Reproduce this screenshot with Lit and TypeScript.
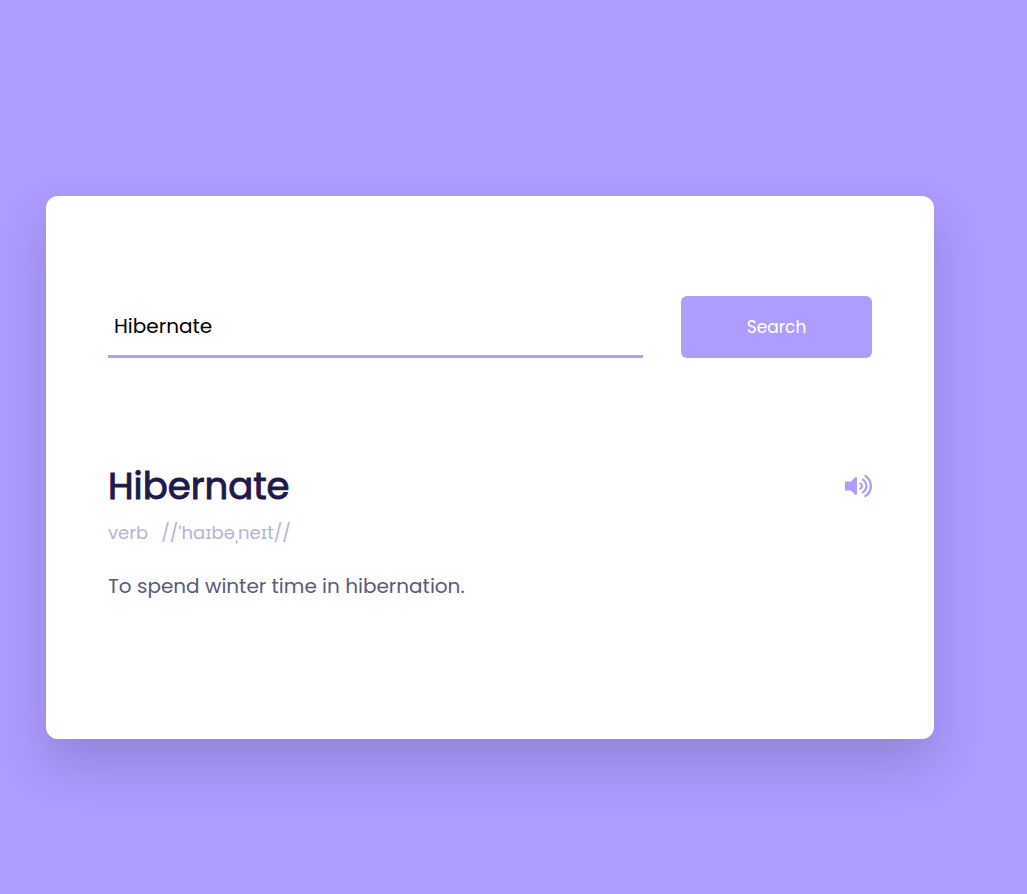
import { LitElement, html, css } from "lit";
import { customElement, state } from "lit/decorators.js";

@customElement("app-root")
export class AppRoot extends LitElement {
  static styles = css`
    :host {
      display: flex;
      align-items: center;
      box-sizing: border-box;
      min-height: 100vh;
      padding: 41px 93px 0 46px;
      background: #ae9cff;
      font-family: Poppins, Inter, sans-serif;
    }
    * {
      box-sizing: border-box;
      margin: 0;
      font-family: inherit;
    }
    .card {
      flex: 1;
      padding: 100px 62px;
      border-radius: 12px;
      background: #fff;
      box-shadow: 0 25px 50px rgba(38, 33, 61, 0.2);
    }
    .search {
      display: flex;
      justify-content: space-between;
    }
    .field {
      width: 70%;
      height: 62px;
      padding: 0 6px;
      border: 0;
      border-bottom: 3px solid #ae9cff;
      border-radius: 0;
      outline: 0;
      background: transparent;
      color: #000;
      font-size: 20px;
    }
    .submit {
      width: 25%;
      border: 0;
      border-radius: 6px;
      background: #ae9cff;
      color: #fff;
      font-size: 17px;
      cursor: pointer;
    }
    .result {
      padding: 100px 0 38px;
    }
    .word {
      display: flex;
      align-items: center;
      justify-content: space-between;
    }
    .title {
      color: #1f194c;
      font-size: 37px;
      font-weight: 400;
      line-height: 56px;
      -webkit-text-stroke: 1px currentColor;
    }
    .sound {
      display: flex;
      padding: 0;
      border: 0;
      background: transparent;
      color: #ae9cff;
      cursor: pointer;
    }
    .icon {
      width: 27px;
      height: 24px;
      fill: currentColor;
    }
    .details {
      display: flex;
      gap: 13px;
      padding: 5px 0 24px;
      color: #b3b3d6;
      font-size: 18px;
      line-height: 28px;
    }
    .meaning {
      color: #575a7b;
      font-size: 20px;
      line-height: 30px;
    }
  `;

  @state() private query = "Hibernate";

  private onInput(e: Event) {
    this.query = (e.target as HTMLInputElement).value;
  }

  render() {
    return html`
      <main class="card">
        <form class="search" @submit=${(e: Event) => e.preventDefault()}>
          <input
            class="field"
            type="text"
            aria-label="Word"
            .value=${this.query}
            @input=${this.onInput}
          />
          <button class="submit" type="submit">Search</button>
        </form>
        <section class="result">
          <div class="word">
            <h1 class="title">Hibernate</h1>
            <button class="sound" type="button" aria-label="Play pronunciation">
              <svg class="icon" viewBox="0 0 576 512" aria-hidden="true">
                <path
                  d="M215.03 71.05L126.06 160H24c-13.26 0-24 10.74-24 24v144c0 13.25 10.74 24 24 24h102.06l88.97 88.95c15.03 15.03 40.97 4.47 40.97-16.97V88.02c0-21.46-25.96-31.98-40.97-16.97zm233.32-51.08c-11.17-7.33-26.18-4.24-33.51 6.95-7.34 11.17-4.22 26.18 6.95 33.51 66.27 43.49 105.82 116.6 105.82 195.58 0 78.98-39.55 152.09-105.82 195.58-11.17 7.32-14.29 22.34-6.95 33.5 7.04 10.71 21.93 14.56 33.51 6.95C528.27 439.58 576 351.33 576 256S528.27 72.43 448.35 19.97zM480 256c0-63.53-32.06-121.94-85.77-156.24-11.19-7.14-26.03-3.82-33.12 7.46s-3.78 26.21 7.41 33.36C408.27 165.97 432 209.11 432 256s-23.73 90.02-63.48 115.42c-11.19 7.14-14.5 22.07-7.41 33.36 6.51 10.36 21.12 15.14 33.12 7.46C447.94 377.94 480 319.54 480 256zm-141.77-76.87c-11.58-6.33-26.19-2.16-32.61 9.45-6.39 11.61-2.16 26.2 9.45 32.61C327.98 228.28 336 241.63 336 256c0 14.38-8.02 27.72-20.92 34.81-11.61 6.41-15.84 21-9.45 32.61 6.43 11.66 21.05 15.8 32.61 9.45 28.23-15.55 45.77-45 45.77-76.88s-17.54-61.32-45.78-76.86z"
                />
              </svg>
            </button>
          </div>
          <div class="details">
            <span>verb</span>
            <span>//ˈhaɪbəˌneɪt//</span>
          </div>
          <p class="meaning">To spend winter time in hibernation.</p>
        </section>
      </main>
    `;
  }
}
